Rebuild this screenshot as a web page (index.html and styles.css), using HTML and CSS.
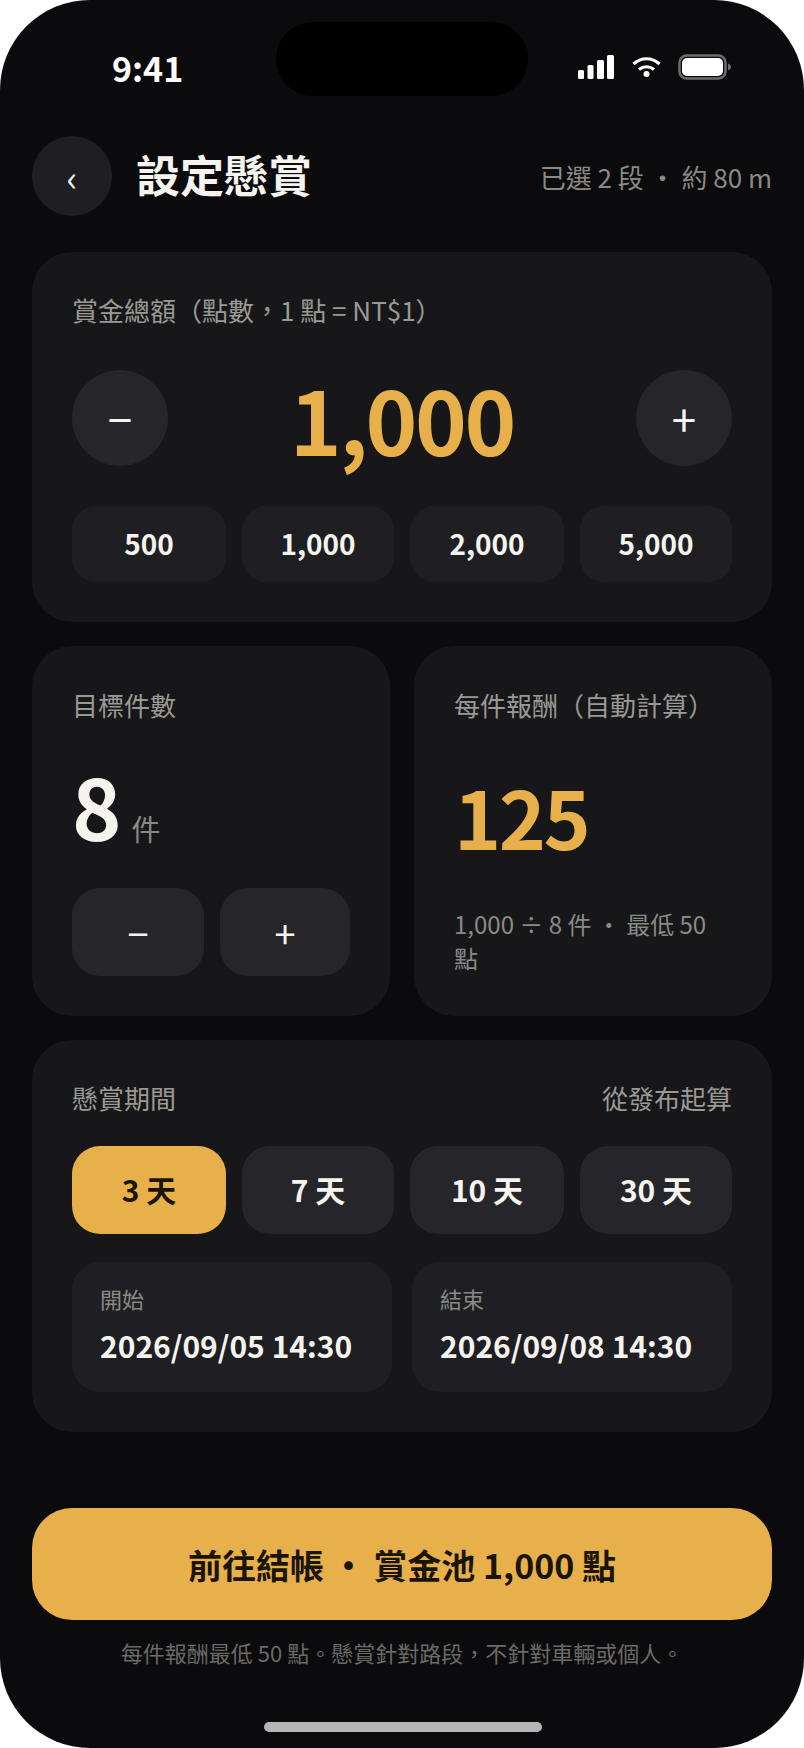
FILE: index.html
```html
<!DOCTYPE html>
<html lang="zh-Hant">
  <head>
    <meta charset="UTF-8" />
    <meta name="viewport" content="width=device-width, initial-scale=1.0" />
    <title>設定懸賞</title>
    <link rel="stylesheet" href="styles.css">
  </head>
  <body>
    <div class="phone">
      <div class="notch"></div>
      <div class="status-bar">
        <span class="time">9:41</span>
        <div class="status-icons">
          <svg class="icon-signal" width="36" height="24" viewBox="0 0 36 24" fill="#fff">
            <rect x="0" y="15" width="6" height="9" rx="1.5" />
            <rect x="9.500" y="10" width="6" height="14" rx="1.5" />
            <rect x="19" y="5" width="7" height="19" rx="1.5" />
            <rect x="29" y="0" width="7" height="24" rx="1.5" />
          </svg>
          <svg class="icon-wifi" width="29" height="20" viewBox="0 0 29 20" fill="none" stroke="#fff" stroke-width="3.200">
            <path d="M1.500 7 C9 0 20 0 27.500 7" />
            <path d="M7 12.500 C11.500 8.800 17.500 8.800 22 12.500" />
            <circle cx="14.500" cy="17" r="3" fill="#fff" stroke="none" />
          </svg>
          <svg class="icon-battery" width="54" height="26" viewBox="0 0 54 26">
            <rect x="1.500" y="1.500" width="46" height="23" rx="7" fill="none" stroke="#6e6e6e" stroke-width="2.500" />
            <rect x="4" y="4" width="41" height="18" rx="5" fill="#fff" />
            <path d="M50 9.500 C52 10.500 53 11.500 53 13 C53 14.500 52 15.500 50 16.500 Z" fill="#6e6e6e" />
          </svg>
        </div>
      </div>

      <header class="top-bar">
        <button class="back-btn">‹</button>
        <h1 class="title">設定懸賞</h1>
        <span class="selection">已選 2 段 ・ 約 80 m</span>
      </header>

      <section class="card total-card">
        <div class="label">賞金總額（點數，1 點 = NT$1）</div>
        <div class="amount-row">
          <button class="round-btn">−</button>
          <span class="amount">1,000</span>
          <button class="round-btn">+</button>
        </div>
        <div class="four-col">
          <button class="preset">500</button>
          <button class="preset">1,000</button>
          <button class="preset">2,000</button>
          <button class="preset">5,000</button>
        </div>
      </section>

      <div class="two-col">
        <section class="card count-card">
          <div class="label">目標件數</div>
          <div class="count-value"><span class="count">8</span><span class="unit">件</span></div>
          <div class="count-btns">
            <button class="square-btn">−</button>
            <button class="square-btn">+</button>
          </div>
        </section>
        <section class="card reward-card">
          <div class="label">每件報酬（自動計算）</div>
          <div class="reward">125</div>
          <div class="reward-note">1,000 ÷ 8 件 ・ 最低 50 點</div>
        </section>
      </div>

      <section class="card period-card">
        <div class="period-head">
          <span class="label">懸賞期間</span>
          <span class="label">從發布起算</span>
        </div>
        <div class="four-col">
          <button class="day active">3 天</button>
          <button class="day">7 天</button>
          <button class="day">10 天</button>
          <button class="day">30 天</button>
        </div>
        <div class="dates">
          <div class="date-box">
            <div class="date-label">開始</div>
            <div class="date-value">2026/09/05 14:30</div>
          </div>
          <div class="date-box">
            <div class="date-label">結束</div>
            <div class="date-value">2026/09/08 14:30</div>
          </div>
        </div>
      </section>

      <button class="checkout-btn">前往結帳 ・ 賞金池 1,000 點</button>
      <p class="footnote">每件報酬最低 50 點。懸賞針對路段，不針對車輛或個人。</p>
      <div class="home-bar"></div>
    </div>
  </body>
</html>
```

FILE: styles.css
```css
* {
  box-sizing: border-box;
}

html,
body {
  margin: 0;
  padding: 0;
  background-color: #fff;
}

body {
  font-family: "Noto Sans CJK TC", "Noto Sans", sans-serif;
  color: #f5f3ee;
}

button {
  font-family: inherit;
  border: none;
  padding: 0;
  cursor: pointer;
}

.phone {
  width: 804px;
  height: 1748px;
  background-color: #0b0b0d;
  border-radius: 90px;
  overflow: hidden;
  position: relative;
  padding: 0 32px;
  display: flex;
  flex-direction: column;
}

.notch {
  position: absolute;
  top: 22px;
  left: 276px;
  width: 252px;
  height: 74px;
  border-radius: 37px;
  background-color: #000;
}

.status-bar {
  height: 136px;
  padding: 44px 40px 0 80px;
  display: flex;
  justify-content: space-between;
  align-items: flex-start;
}

.time {
  font-size: 34px;
  font-weight: 700;
  line-height: 48px;
  color: #fff;
}

.status-icons {
  display: flex;
  align-items: center;
  gap: 18px;
  padding-top: 10px;
}

.icon-battery {
  margin-left: -1px;
}

.top-bar {
  height: 80px;
  display: flex;
  align-items: center;
  margin-bottom: 36px;
}

.back-btn {
  width: 80px;
  height: 80px;
  border-radius: 50%;
  background-color: #1f1f23;
  color: #f5f3ee;
  font-size: 36px;
  line-height: 1;
}

.title {
  font-size: 44px;
  font-weight: 700;
  line-height: 76px;
  margin: 0 0 4px 24px;
  flex: 1;
}

.selection {
  font-size: 26px;
  color: #8a8a85;
}

.card {
  background-color: #17171a;
  border-radius: 40px;
  padding: 40px;
}

.label {
  font-size: 26px;
  line-height: 36px;
  color: #9a9a95;
}

.total-card {
  height: 370px;
  margin-bottom: 24px;
}

.amount-row {
  display: flex;
  align-items: center;
  justify-content: space-between;
  margin-top: 42px;
}

.round-btn {
  width: 96px;
  height: 96px;
  border-radius: 50%;
  background-color: #26262a;
  color: #f5f3ee;
  font-size: 44px;
  line-height: 1;
}

.amount {
  font-size: 88px;
  font-weight: 700;
  line-height: 96px;
  letter-spacing: -2.4px;
  color: #e8b04b;
}

.four-col {
  display: grid;
  grid-template-columns: 154fr 152fr 154fr 152fr;
  gap: 16px;
}

.total-card .four-col {
  margin-top: 40px;
}

.preset {
  height: 76px;
  border-radius: 24px;
  background-color: #1f1f23;
  color: #f5f3ee;
  font-size: 28px;
  font-weight: 700;
  padding-bottom: 2px;
}

.two-col {
  display: grid;
  grid-template-columns: 1fr 1fr;
  gap: 24px;
  margin-bottom: 24px;
}

.count-card,
.reward-card {
  height: 370px;
  padding-top: 41px;
}

.count-value {
  display: flex;
  align-items: baseline;
  gap: 12px;
  margin-top: 27px;
  height: 110px;
}

.count {
  font-size: 84px;
  font-weight: 700;
  line-height: 110px;
  letter-spacing: -2px;
}

.unit {
  font-size: 29px;
  color: #8a8a85;
}

.count-btns {
  display: grid;
  grid-template-columns: 132fr 130fr;
  gap: 16px;
  margin-top: 28px;
}

.square-btn {
  height: 88px;
  border-radius: 28px;
  background-color: #26262a;
  color: #f5f3ee;
  font-size: 38px;
}

.reward {
  font-size: 80px;
  font-weight: 700;
  line-height: 110px;
  letter-spacing: -2.4px;
  color: #e8b04b;
  margin-top: 37px;
}

.reward-note {
  font-size: 24px;
  line-height: 34px;
  color: #8a8a85;
  margin-top: 37px;
}

.period-card {
  height: 392px;
}

.period-head {
  display: flex;
  justify-content: space-between;
  margin-bottom: 30px;
}

.day {
  height: 88px;
  border-radius: 28px;
  background-color: #26262a;
  color: #f5f3ee;
  font-size: 30px;
  font-weight: 700;
  padding-bottom: 2px;
}

.day.active {
  background-color: #e8b04b;
  color: #1a1405;
}

.dates {
  display: grid;
  grid-template-columns: 1fr 1fr;
  gap: 20px;
  margin-top: 28px;
}

.date-box {
  height: 130px;
  border-radius: 28px;
  background-color: #1f1f23;
  padding: 17px 28px 0;
}

.date-label {
  font-size: 22px;
  line-height: 38px;
  color: #8a8a85;
}

.date-value {
  font-size: 30px;
  font-weight: 700;
  line-height: 44px;
  margin-top: 6px;
}

.checkout-btn {
  height: 112px;
  border-radius: 40px;
  background-color: #e8b04b;
  color: #1a1405;
  font-size: 34px;
  font-weight: 700;
  margin-top: 76px;
  flex-shrink: 0;
}

.footnote {
  margin: 14px 0 0;
  text-align: center;
  font-size: 22px;
  line-height: 36px;
  color: #6a6a66;
}

.home-bar {
  position: absolute;
  left: 264px;
  bottom: 16px;
  width: 278px;
  height: 10px;
  border-radius: 5px;
  background-color: #b5b5b5;
}
```
